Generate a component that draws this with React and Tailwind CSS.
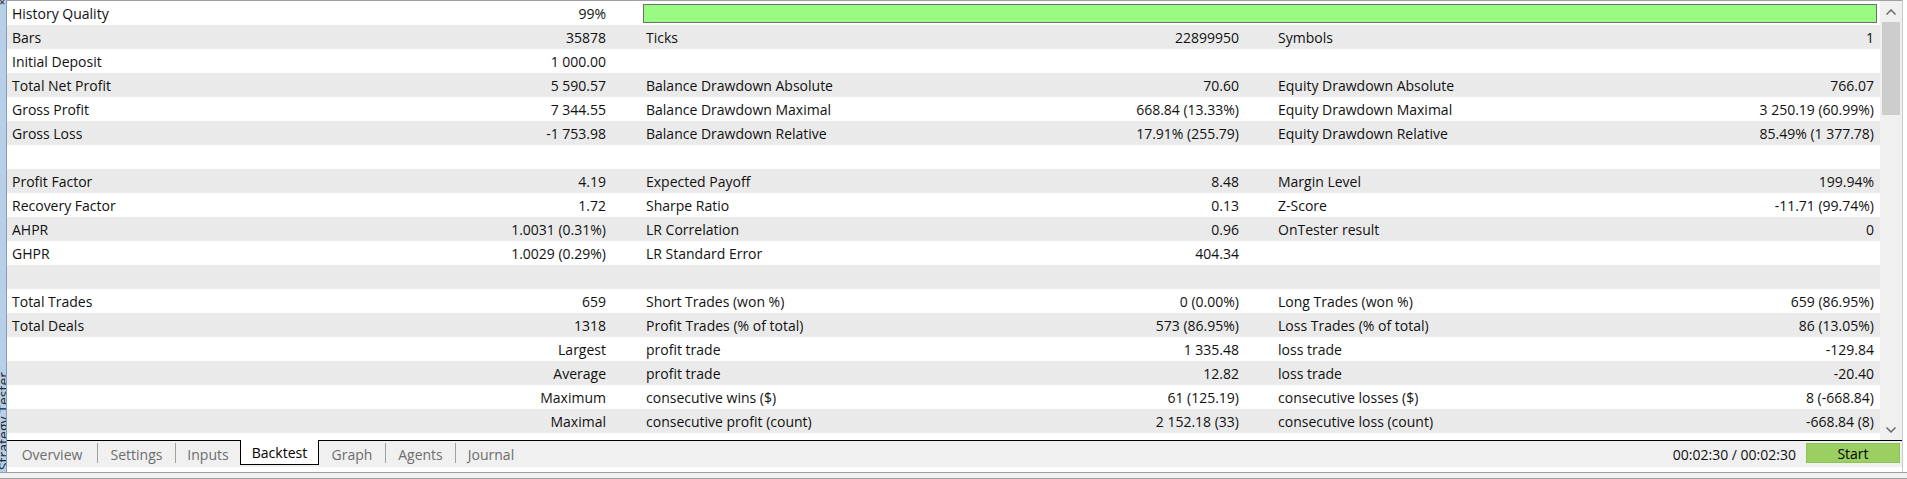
import React from "react";

const FONT = { fontFamily: '"Segoe UI", "Open Sans", "Liberation Sans", Arial, sans-serif' };

const ROWS = [
  [["History Quality", "99%"], "BAR"],
  [["Bars", "35878"], ["Ticks", "22899950"], ["Symbols", "1"]],
  [["Initial Deposit", "1 000.00"], ["", ""], ["", ""]],
  [["Total Net Profit", "5 590.57"], ["Balance Drawdown Absolute", "70.60"], ["Equity Drawdown Absolute", "766.07"]],
  [["Gross Profit", "7 344.55"], ["Balance Drawdown Maximal", "668.84 (13.33%)"], ["Equity Drawdown Maximal", "3 250.19 (60.99%)"]],
  [["Gross Loss", "-1 753.98"], ["Balance Drawdown Relative", "17.91% (255.79)"], ["Equity Drawdown Relative", "85.49% (1 377.78)"]],
  [["", ""], ["", ""], ["", ""]],
  [["Profit Factor", "4.19"], ["Expected Payoff", "8.48"], ["Margin Level", "199.94%"]],
  [["Recovery Factor", "1.72"], ["Sharpe Ratio", "0.13"], ["Z-Score", "-11.71 (99.74%)"]],
  [["AHPR", "1.0031 (0.31%)"], ["LR Correlation", "0.96"], ["OnTester result", "0"]],
  [["GHPR", "1.0029 (0.29%)"], ["LR Standard Error", "404.34"], ["", ""]],
  [["", ""], ["", ""], ["", ""]],
  [["Total Trades", "659"], ["Short Trades (won %)", "0 (0.00%)"], ["Long Trades (won %)", "659 (86.95%)"]],
  [["Total Deals", "1318"], ["Profit Trades (% of total)", "573 (86.95%)"], ["Loss Trades (% of total)", "86 (13.05%)"]],
  [["", "Largest"], ["profit trade", "1 335.48"], ["loss trade", "-129.84"]],
  [["", "Average"], ["profit trade", "12.82"], ["loss trade", "-20.40"]],
  [["", "Maximum"], ["consecutive wins ($)", "61 (125.19)"], ["consecutive losses ($)", "8 (-668.84)"]],
  [["", "Maximal"], ["consecutive profit (count)", "2 152.18 (33)"], ["consecutive loss (count)", "-668.84 (8)"]],
];

function Pair({ cell, className }) {
  return (
    <div className={`flex justify-between whitespace-nowrap ${className}`}>
      <span>{cell[0]}</span>
      <span>{cell[1]}</span>
    </div>
  );
}

function StatRow({ index, row }) {
  const bg = index % 2 ? "bg-[#eaeaea]" : "bg-white";
  const [c1, c2, c3] = row;
  return (
    <div className={`flex h-[24px] items-center pl-[5px] ${bg}`}>
      <Pair cell={c1} className="w-[594px]" />
      {c2 === "BAR" ? (
        <div className="ml-[37px] h-[19px] w-[1234px] border border-[#6e6e6e] bg-[#99fb82]" />
      ) : (
        <>
          <Pair cell={c2} className="ml-[40px] w-[593px]" />
          <Pair cell={c3} className="ml-[39px] w-[596px]" />
        </>
      )}
    </div>
  );
}

function Chevron({ up }) {
  return (
    <svg width="12" height="8" viewBox="0 0 12 8">
      <path
        d={up ? "M1.5 6.5 L6 2 L10.5 6.5" : "M1.5 1.5 L6 6 L10.5 1.5"}
        fill="none"
        stroke="#606060"
        strokeWidth="1.4"
      />
    </svg>
  );
}

function Scrollbar() {
  return (
    <div className="flex w-[22px] flex-col bg-[#f0f0f0]">
      <div className="flex h-[21px] items-center justify-center">
        <Chevron up />
      </div>
      <div className="mx-[2px] h-[93px] bg-[#cdcdcd]" />
      <div className="flex-1" />
      <div className="flex h-[21px] items-center justify-center">
        <Chevron />
      </div>
    </div>
  );
}

function Sep() {
  return <div className="mt-[2px] h-[20px] w-px self-start bg-[#a0a0a0]" />;
}

function Tab({ label, w }) {
  return (
    <div className={`flex items-center justify-center text-[#6d6d6d] ${w}`}>{label}</div>
  );
}

function TabStrip() {
  return (
    <div className="flex h-[27px] items-stretch border-t border-black bg-[#f0f0f0]">
      <Tab label="Overview" w="w-[90px]" />
      <Sep />
      <Tab label="Settings" w="w-[77px]" />
      <Sep />
      <Tab label="Inputs" w="w-[64px]" />
      <div className="-mt-px flex h-[25px] w-[79px] items-center justify-center self-start border-x border-b border-black bg-white text-black">
        Backtest
      </div>
      <Tab label="Graph" w="w-[66px]" />
      <Sep />
      <Tab label="Agents" w="w-[69px]" />
      <Sep />
      <Tab label="Journal" w="w-[70px]" />
      <div className="flex-1" />
      <div className="flex items-center pr-[10px] text-[#111]">00:02:30 / 00:02:30</div>
      <div className="mr-[2px] mt-[2px] flex h-[20px] w-[94px] items-center justify-center self-start border border-[#8cc257] bg-[#9bcf62] text-black">
        Start
      </div>
    </div>
  );
}

export default function App() {
  return (
    <div className="flex h-[479px] w-[1907px] flex-col overflow-hidden bg-white text-[14px] text-[#111]" style={FONT}>
      <div className="flex h-[472px]">
        {/* docked panel caption strip */}
        <div className="flex w-[7px] flex-col justify-between overflow-hidden border-r border-[#7f9db9] bg-[#b8cfe8]">
          <div className="-mt-[4px] -ml-[1px] text-[11px] leading-none text-[#222]">×</div>
          <div className="mb-[2px] -ml-[4px] rotate-180 whitespace-nowrap text-[14px] leading-[16px] text-[#1e2b3c] [writing-mode:vertical-rl]">
            Strategy Tester
          </div>
        </div>

        <div className="flex w-[1895px] flex-col">
          <div className="flex h-[440px] border-t border-[#a0a0a0]">
            <div className="w-[1873px] bg-white">
              {ROWS.map((row, i) => (
                <StatRow key={i} index={i} row={row} />
              ))}
            </div>
            <Scrollbar />
          </div>
          <TabStrip />
          <div className="h-[5px] bg-white" />
        </div>

        <div className="w-[5px] border-l border-[#c8c8c8] bg-white" />
      </div>
      <div className="h-px bg-[#a0a0a0]" />
      <div className="h-[5px] bg-[#f0f0f0]" />
      <div className="h-px bg-[#a0a0a0]" />
    </div>
  );
}
